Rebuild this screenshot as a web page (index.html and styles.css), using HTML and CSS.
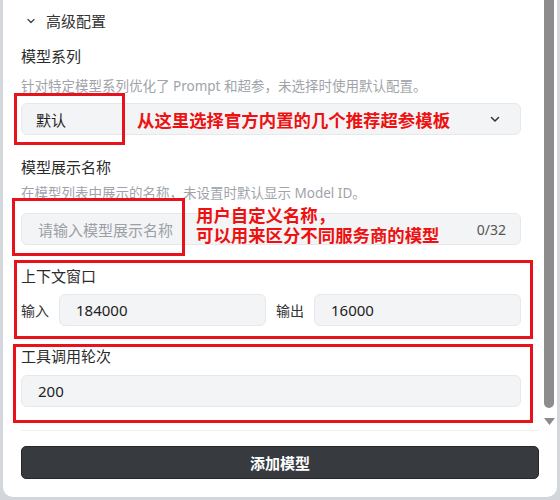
FILE: index.html
```html
<!DOCTYPE html>
<html lang="zh-CN">
<head>
<meta charset="utf-8">
<link rel="stylesheet" href="styles.css">
</head>
<body>
<div class="panel">
  <div class="main">
    <div class="content">
      <div class="header">
        <svg class="chev-small" width="8" height="6" viewBox="0 0 8 6"><path d="M1 1.5 L4 4.5 L7 1.5" fill="none" stroke="#444" stroke-width="1.3" stroke-linecap="round" stroke-linejoin="round"/></svg>
        <span>高级配置</span>
      </div>

      <div class="label first">模型系列</div>
      <div class="desc">针对特定模型系列优化了 Prompt 和超参，未选择时使用默认配置。</div>
      <div class="field select">
        <span class="value">默认</span>
        <svg width="10" height="7" viewBox="0 0 10 7"><path d="M1.5 1.5 L5 5 L8.5 1.5" fill="none" stroke="#333" stroke-width="1.5" stroke-linecap="round" stroke-linejoin="round"/></svg>
      </div>

      <div class="label second">模型展示名称</div>
      <div class="desc tight">在模型列表中展示的名称，未设置时默认显示 Model ID。</div>
      <div class="field input">
        <span class="placeholder">请输入模型展示名称</span>
        <span class="count">0/32</span>
      </div>

      <div class="label third">上下文窗口</div>
      <div class="ctx-row">
        <span class="small-label">输入</span>
        <div class="field"><span class="value">184000</span></div>
        <span class="small-label">输出</span>
        <div class="field"><span class="value">16000</span></div>
      </div>

      <div class="label fourth">工具调用轮次</div>
      <div class="field spaced"><span class="value">200</span></div>
    </div>
    <div class="scrollbar">
      <div class="thumb"></div>
      <svg class="arrow" width="11" height="7" viewBox="0 0 11 7"><path d="M0 0 H11 L5.5 7 Z" fill="#8c8c8c"/></svg>
    </div>
  </div>
  <div class="footer">
    <button class="btn">添加模型</button>
  </div>

  <div class="mark box1"></div>
  <div class="note note1">从这里选择官方内置的几个推荐超参模板</div>
  <div class="mark box2"></div>
  <div class="note note2">用户自定义名称，<br>可以用来区分不同服务商的模型</div>
  <div class="mark box3"></div>
  <div class="mark box4"></div>
</div>
</body>
</html>
```

FILE: styles.css
```css
* { box-sizing: border-box; }
html, body { margin: 0; padding: 0; }
body {
  background: #d3d6da;
  width: 560px;
  height: 500px;
  overflow: hidden;
  font-family: "Noto Sans", "Noto Sans CJK SC", sans-serif;
  color: #333;
}
.panel {
  position: relative;
  margin-left: 3px;
  width: 554px;
  height: 497px;
  background: #fff;
  border-radius: 0 0 10px 10px;
  display: flex;
  flex-direction: column;
}
.main {
  height: 430px;
  display: flex;
}
.content {
  flex: 1;
  padding: 0 20px 0 18px;
}
.header {
  margin-top: 10px;
  height: 22px;
  display: flex;
  align-items: center;
  font-size: 15px;
  line-height: 22px;
  color: #333;
}
.chev-small { margin-left: 6px; margin-right: 11px; }
.label {
  font-size: 15px;
  line-height: 22px;
  color: #2b2b2b;
}
.label.first { margin-top: 13px; }
.label.second { margin-top: 21px; }
.label.third { margin-top: 20px; }
.label.fourth { margin-top: 19px; }
.desc {
  margin-top: 9px;
  font-size: 13.5px;
  line-height: 20px;
  color: #a0a4aa;
  white-space: nowrap;
}
.desc.tight { margin-top: 5px; }
.field {
  height: 32px;
  background: #f3f4f6;
  border: 1px solid #e6e8eb;
  border-radius: 6px;
  display: flex;
  align-items: center;
  justify-content: space-between;
  padding: 0 14px 0 16px;
  font-size: 15px;
  color: #222;
}
.select { margin-top: 7px; padding-left: 14px; padding-right: 20px; }
.input { margin-top: 10px; }
.placeholder { color: #9ca0a6; }
.count { font-size: 14px; color: #555; }
.ctx-row {
  margin-top: 7px;
  display: grid;
  grid-template-columns: auto 1fr auto 1fr;
  gap: 10px;
  align-items: center;
}
.small-label { font-size: 14px; color: #333; }
.spaced { margin-top: 8px; }
.scrollbar {
  width: 16px;
  display: flex;
  flex-direction: column;
  align-items: center;
}
.thumb {
  width: 10px;
  height: 408px;
  background: #8c8c8c;
  border-radius: 0 0 5px 5px;
}
.arrow { margin-top: 10px; }
.footer {
  margin: 0 18px;
  border-top: 1px solid #f0f1f3;
  padding-top: 15px;
}
.btn {
  display: block;
  width: 100%;
  height: 33px;
  background: #373a3f;
  border: 1px solid #25272b;
  border-radius: 5px;
  color: #fff;
  font-family: "Noto Sans CJK SC", sans-serif;
  font-size: 15px;
  font-weight: 700;
}
.mark {
  position: absolute;
  border: 3px solid #e8121c;
}
.box1 { left: 11px; top: 93px; width: 111px; height: 52px; }
.box2 { left: 9px; top: 198px; width: 173px; height: 58px; }
.box3 { left: 11px; top: 260px; width: 519px; height: 79px; }
.box4 { left: 10px; top: 344px; width: 520px; height: 79px; }
.note {
  position: absolute;
  color: #ee1111;
  font-family: "Noto Sans CJK SC", sans-serif;
  font-weight: 700;
  font-size: 17.4px;
  white-space: nowrap;
}
.note1 { left: 134px; top: 108px; line-height: 24px; }
.note2 { left: 193px; top: 205px; line-height: 20px; }
```
